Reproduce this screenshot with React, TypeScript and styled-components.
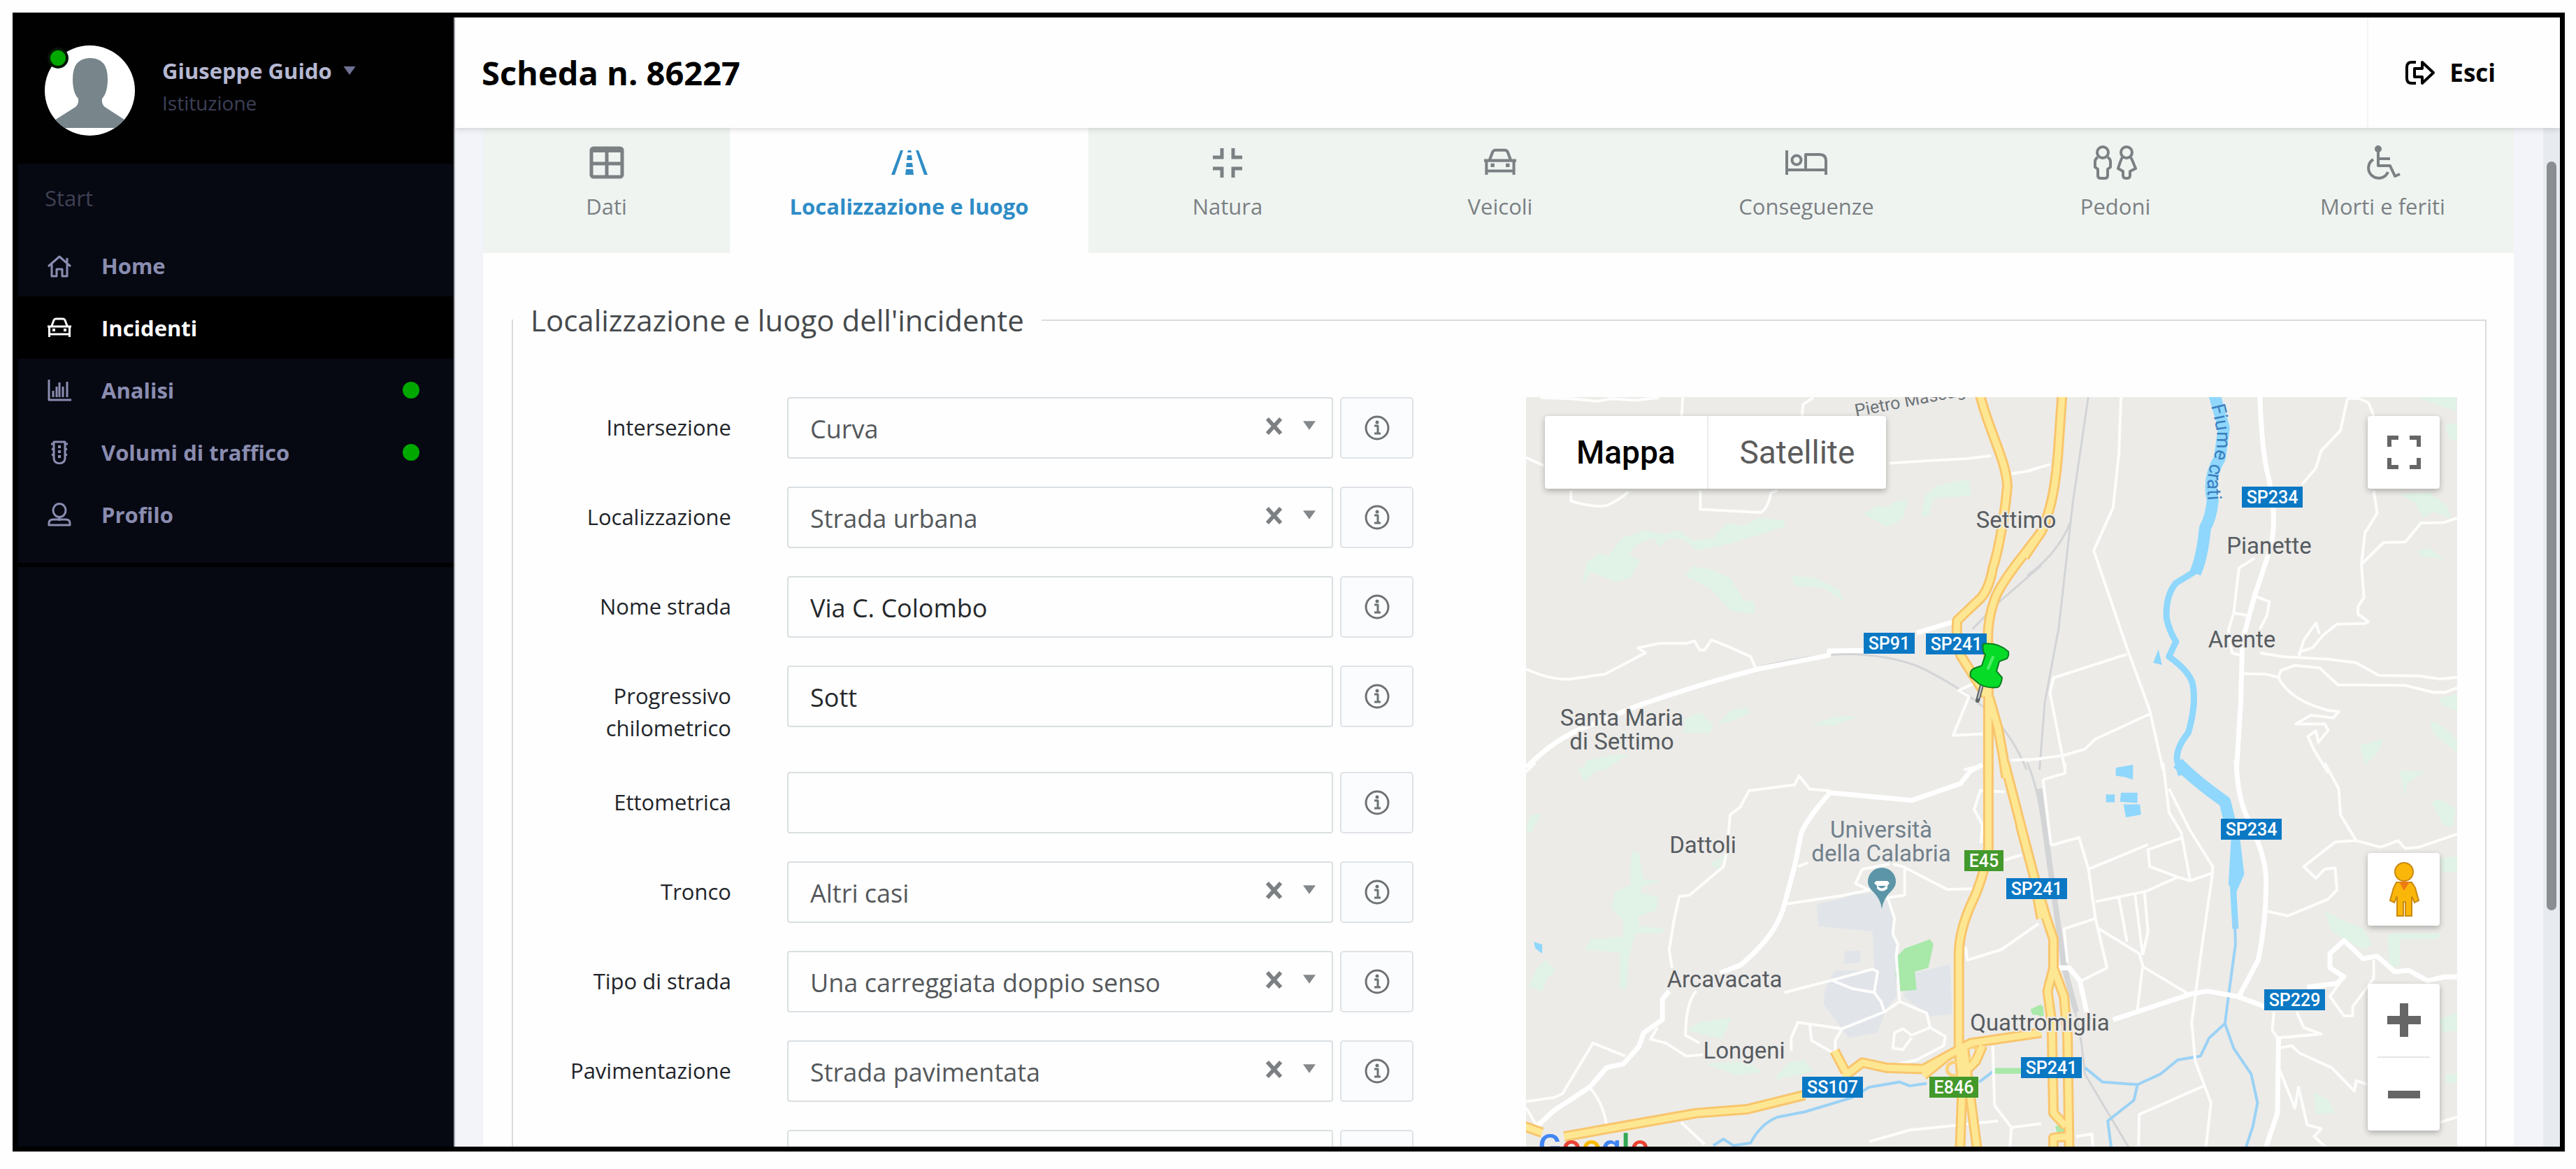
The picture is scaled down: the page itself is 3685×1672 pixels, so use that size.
import React from 'react';
import styled, { createGlobalStyle, css } from 'styled-components';

const GlobalStyle = createGlobalStyle`
  *, *::before, *::after { box-sizing: border-box; }
  html, body { margin: 0; background: #fefefe; }
  body { font-family: 'Open Sans', 'Noto Sans', sans-serif; font-size: 31px; line-height: 46px; color: #212429; }
  button, input, select { font: inherit; color: inherit; margin: 0; }
  a { color: inherit; text-decoration: none; }
`;

/* ---------- shell ---------- */

const Frame = styled.div`
  display: flex;
  height: calc(100vh - 43px);
  margin: 18px 16px 25px 18px;
  border: 7px solid #000;
  overflow: hidden;
`;

const Sidebar = styled.aside`
  flex: 0 0 626px;
  background: #060812;
  border-right: 2px solid #a3a4ab;
  color: #8a8db0;
`;

const Main = styled.main`
  flex: 1;
  min-width: 0;
  display: flex;
  flex-direction: column;
  background: #f2f4f9;
`;

/* ---------- sidebar ---------- */

const Profile = styled.div`
  display: flex;
  align-items: flex-start;
  gap: 39px;
  padding: 40px 39px;
  background: #010102;
`;

const Avatar = styled.div`
  position: relative;
  width: 129px;
  height: 129px;
  flex: none;
  svg { display: block; width: 100%; height: 100%; }
`;

const Online = styled.span`
  position: absolute;
  left: 4px;
  top: 3px;
  width: 30px;
  height: 30px;
  border-radius: 50%;
  background: #00a800;
  border: 4px solid #031703;
`;

const Person = styled.div`
  padding-top: 13px;
`;

const NameButton = styled.button`
  display: flex;
  align-items: center;
  gap: 16px;
  padding: 0;
  border: 0;
  background: none;
  font-size: 31px;
  font-weight: 700;
  line-height: 46px;
  color: #b6b8d2;
  svg { width: 18px; height: 12px; color: #6f7194; }
`;

const Role = styled.div`
  font-size: 28px;
  color: #3d4056;
`;

const NavTitle = styled.h2`
  margin: 0;
  padding: 26px 39px 29px;
  font-size: 31px;
  font-weight: 400;
  line-height: 46px;
  color: #3f4153;
`;

const Nav = styled.nav`
  padding-bottom: 25px;
  border-bottom: 6px solid #010103;
`;

const NavLink = styled.a<{ $active?: boolean }>`
  display: flex;
  align-items: center;
  gap: 43px;
  height: 89px;
  padding: 0 49px 0 43px;
  font-weight: 700;
  color: ${p => (p.$active ? '#fff' : '#8a8db0')};
  background: ${p => (p.$active ? '#000' : 'transparent')};
  svg { width: 34px; height: 34px; flex: none; }
`;

const Dot = styled.span`
  width: 24px;
  height: 24px;
  margin-left: auto;
  border-radius: 50%;
  background: #00a800;
`;

/* ---------- header ---------- */

const Header = styled.header`
  position: relative;
  z-index: 1;
  flex: 0 0 158px;
  display: flex;
  align-items: center;
  justify-content: space-between;
  padding-left: 38px;
  background: #fefefe;
  box-shadow: 0 2px 8px rgba(30, 34, 40, 0.16);
`;

const Title = styled.h1`
  margin: 0;
  font-size: 47px;
  line-height: 64px;
  font-weight: 700;
  color: #000;
`;

const Exit = styled.a`
  display: flex;
  align-items: center;
  align-self: stretch;
  gap: 20px;
  padding: 0 92px 0 52px;
  border-left: 2px solid #f3f4f6;
  font-size: 35px;
  font-weight: 700;
  color: #000;
  svg { width: 44px; height: 36px; }
`;

/* ---------- scroll area ---------- */

const Viewport = styled.div`
  flex: 1;
  min-height: 0;
  display: flex;
`;

const Content = styled.div`
  flex: 1;
  min-width: 0;
  overflow: hidden;
  padding: 0 42px 0 40px;
`;

const Track = styled.div`
  flex: 0 0 24px;
  padding: 48px 5px 0;
  background: #e7ebef;
`;

const Thumb = styled.div`
  height: 76%;
  border-radius: 7px;
  background: #8a8e91;
`;

const Tabs = styled.div`
  display: grid;
  grid-template-columns: 353fr 513fr 398fr 382fr 494fr 390fr 375fr;
  background: #eff4f1;
`;

const Tab = styled.button<{ $active?: boolean }>`
  display: flex;
  flex-direction: column;
  align-items: center;
  gap: 14px;
  height: 179px;
  padding: 25px 0 0;
  border: 0;
  background: ${p => (p.$active ? '#fefefe' : 'transparent')};
  color: ${p => (p.$active ? '#2f8cc6' : '#7b8083')};
  font-weight: ${p => (p.$active ? 700 : 400)};
  svg { height: 50px; }
`;

const Card = styled.section`
  padding: 66px 39px 40px 41px;
  background: #fefefe;
`;

const Fieldset = styled.fieldset`
  min-width: 0;
  margin: 0;
  padding: 80px 40px 40px 0;
  border: 2px solid #d9dbdd;
`;

const Legend = styled.legend`
  padding: 0 25px;
  font-size: 42px;
  line-height: 60px;
  color: #45494c;
`;

const Columns = styled.div`
  display: grid;
  grid-template-columns: 1288fr 1332fr;
  gap: 161px;
`;

/* ---------- form ---------- */

const Form = styled.form`
  display: flex;
  flex-direction: column;
  gap: 40px;
`;

const Row = styled.div`
  display: grid;
  grid-template-columns: 312px 1fr 105px;
  align-items: start;
`;

const Label = styled.label`
  padding: 20px 0 0;
  text-align: right;
`;

const control = css`
  height: 88px;
  margin: 0 10px 0 80px;
  border: 2px solid #dadfe2;
  border-radius: 4px;
  background: #fefefe;
  font-size: 36px;
`;

const TextInput = styled.input`
  ${control}
  min-width: 0;
  padding: 2px 31px 0;
  color: #25282b;
  outline: none;
`;

const SelectBox = styled.div`
  ${control}
  display: flex;
  align-items: center;
  padding-right: 23px;
  color: #54585b;
  > svg { width: 18px; height: 13px; margin-bottom: 8px; color: #85888b; }
`;

const Select = styled.select`
  flex: 1;
  min-width: 0;
  height: 100%;
  padding: 4px 31px 0;
  border: 0;
  background: none;
  appearance: none;
  outline: none;
`;

const Clear = styled.button`
  display: flex;
  padding: 0 29px 0 0;
  margin-bottom: 6px;
  border: 0;
  background: none;
  color: #7d8083;
  svg { width: 25px; height: 25px; }
`;

const InfoButton = styled.button`
  display: grid;
  place-items: center;
  height: 88px;
  padding: 0;
  border: 2px solid #dfe3e7;
  border-radius: 5px;
  background: #fbfcfe;
  color: #6d7275;
  svg { width: 36px; height: 36px; }
`;

/* ---------- map ---------- */

const MapBox = styled.div`
  position: relative;
  height: 1140px;
  overflow: hidden;
  background: #ecebe8;
  font-family: Roboto, sans-serif;
  > svg { display: block; width: 100%; height: 100%; }
`;

const MapType = styled.div`
  position: absolute;
  left: 27px;
  top: 27px;
  display: flex;
  height: 104px;
  background: #fff;
  border-radius: 4px;
  box-shadow: 0 3px 8px rgba(0, 0, 0, 0.28);
`;

const MapTypeButton = styled.button<{ $active?: boolean }>`
  padding: 0 45px;
  border: 0;
  background: none;
  font-size: 46px;
  font-weight: ${p => (p.$active ? 500 : 400)};
  color: ${p => (p.$active ? '#000' : '#5c5c5c')};
  & + & { border-left: 2px solid #ececec; }
`;

const MapTools = styled.div<{ $top: number }>`
  position: absolute;
  right: 25px;
  top: ${p => p.$top}px;
  width: 103px;
  background: #fff;
  border-radius: 4px;
  box-shadow: 0 3px 8px rgba(0, 0, 0, 0.28);
`;

const MapTool = styled.button`
  display: grid;
  place-items: center;
  width: 100%;
  height: 104px;
  padding: 0;
  border: 0;
  background: none;
  color: #666;
  svg { display: block; }
`;

const ToolRule = styled.div`
  height: 2px;
  margin: 0 14px;
  background: #e6e6e6;
`;

/* ---------- icons ---------- */

const Line: React.FC<{ box: string; sw?: number; children: React.ReactNode }> = ({ box, sw = 3, children }) => (
  <svg viewBox={box} fill="none" stroke="currentColor" strokeWidth={sw} strokeLinejoin="round" aria-hidden="true">
    {children}
  </svg>
);

const Caret = () => (
  <svg viewBox="0 0 20 14" aria-hidden="true"><path d="M0 0H20L10 14Z" fill="currentColor" /></svg>
);

const HomeIcon = () => (
  <Line box="0 0 34 34"><path d="M1 18L17 4L33 18M6 15V32H13V22H21V32H28V15M28 12V6" /></Line>
);

const CarShape = () => (
  <>
    <path d="M6 14L9 6Q10 4 12 4H22Q24 4 25 6L28 14M0 15H34M2.500 15V30M31.500 15V30M2.500 26H31.500" />
    <path d="M7 18h4v4h-4zM23 18h4v4h-4z" fill="currentColor" stroke="none" />
  </>
);

const CarIcon = () => <Line box="0 0 34 34"><CarShape /></Line>;

const ChartIcon = () => (
  <Line box="0 0 34 34"><path d="M2 2V31H34" /><path d="M8 27V18M13 27V12M17 27V6M22 27V12M28 27V5" /></Line>
);

const TrafficIcon = () => (
  <Line box="0 0 34 34">
    <path d="M9 2H25V25Q25 32 17 33Q9 32 9 25ZM5 5H9M25 5H29M6 12L9 13M28 12L25 13M6 20L9 21M28 20L25 21" />
    <path d="M15 7h4v4h-4zM15 14h4v4h-4zM15 21h4v4h-4z" fill="currentColor" stroke="none" />
  </Line>
);

const UserIcon = () => (
  <Line box="0 0 34 34"><ellipse cx="17" cy="11" rx="9" ry="9.500" /><path d="M17 20V26M2 32V29Q2 24 8 24H26Q32 24 32 29V32Z" /></Line>
);

const ExitIcon = () => (
  <Line box="0 0 44 36" sw={4}>
    <path d="M16 3H10Q3 3 3 10V26Q3 33 10 33H16M14 12H25V3L41 18L25 33V24H14Z" />
  </Line>
);

const TableIcon = () => (
  <Line box="0 0 50 50" sw={5}><rect x="3" y="4" width="44" height="41" rx="3" /><path d="M3 7H47" strokeWidth="6" /><path d="M25 6V45M3 26H47" /></Line>
);

const RoadIcon = () => (
  <svg viewBox="0 0 54 50" fill="currentColor" aria-hidden="true">
    <path d="M14 7h4L6 42H1ZM36 7h4L53 42H48ZM25 7h4l1 3h-6ZM24 14h6l1 7h-8ZM23 25h8l1 6h-10ZM22 34h10l1 8H21Z" />
  </svg>
);

const CompressIcon = () => (
  <Line box="0 0 42 50" sw={5}><path d="M13 4V17H0M29 4V17H42M13 46V33H0M29 46V33H42" strokeLinejoin="miter" /></Line>
);

const CarTabIcon = () => <Line box="0 -1 34 37" sw={3}><CarShape /></Line>;

const BedIcon = () => (
  <Line box="0 0 62 50" sw={4}>
    <path d="M3 7V42M3 35H59M59 42V22Q59 13 50 13H30V35" /><circle cx="17" cy="21" r="6.500" />
  </Line>
);

const PeopleIcon = () => (
  <Line box="0 0 64 50" sw={4}>
    <circle cx="14" cy="10" r="8" />
    <path d="M7 17Q3 19 3 23V31L7 34V43Q7 47 11 47H17Q21 47 21 43V34L25 31V23Q25 19 21 17" />
    <circle cx="48" cy="10" r="8" />
    <path d="M42 17Q40 20 36 33L43 37V43Q43 47 48 47Q53 47 53 43V37L61 33Q56 20 54 17" />
  </Line>
);

const WheelchairIcon = () => (
  <Line box="0 0 50 50" sw={4}>
    <circle cx="18" cy="5" r="5" fill="currentColor" stroke="none" />
    <path d="M18 7V29H35L42 44L49 41M18 19H35M11 20A14.500 14.500 0 1 0 32 38" />
  </Line>
);

const InfoIcon = () => (
  <Line box="0 0 36 36" sw={3}>
    <circle cx="18" cy="18" r="16" /><path d="M14 15H19V26M14 26H23" /><circle cx="18" cy="10" r="2.500" fill="currentColor" stroke="none" />
  </Line>
);

const CrossIcon = () => (
  <Line box="0 0 26 26" sw={6}><path d="M3 2L23 24M23 2L3 24" /></Line>
);

const Silhouette = () => (
  <svg viewBox="0 0 129 129" role="img" aria-label="Foto profilo">
    <clipPath id="face"><circle cx="64.500" cy="64.500" r="64.500" /></clipPath>
    <g clipPath="url(#face)">
      <rect width="129" height="129" fill="#fff" />
      <path d="M6 112L44 88Q49 84 48 76Q40 68 40 48Q40 18 65 18Q90 18 90 48Q90 68 82 76Q81 84 86 88L123 112V118H6Z" fill="#78858a" />
    </g>
  </svg>
);

/* ---------- map drawing ---------- */

// The map is drawn on four sheets, each with its own grid.
type Sheet = 'nw' | 'ne' | 'sw' | 'se';
const sheets: Record<Sheet, string> = {
  nw: 'translate(-23 -27) scale(.4847 .3571)',
  ne: 'translate(717 -27) scale(.5006 .3571)',
  sw: 'translate(-23 523) scale(.4847 .3712)',
  se: 'translate(717 523) scale(.5006 .3712)',
};

type Layer = { stroke?: string; width?: number; fill?: string; paths: Partial<Record<Sheet, string>> };

const woods: Layer = {
  fill: '#e0f3e6',
  paths: {
    nw: 'M215 830L225 740L262 700L290 712L330 640L400 610L450 625L500 610L540 650L600 640L640 580L690 590L735 560L812 570L808 595L740 625L640 665L550 690L510 645L470 640L440 675L425 640L380 660L350 700L385 735L355 800L310 815L240 775ZM515 790L540 755L590 765L650 800L690 890L722 895L722 945L650 930L590 840ZM828 790L900 800L970 845L985 895L925 840L840 830ZM1045 545L1080 510L1120 520L1130 495L1175 485L1160 560L1115 595ZM1215 555L1225 470L1260 430L1355 405L1362 470L1250 480L1235 550ZM510 1420L520 1360L565 1340L600 1390L590 1420ZM615 1385L650 1330L700 1320L710 1340L660 1370ZM890 1390L960 1355L1025 1355L960 1390ZM220 1568L225 1530L300 1510L350 1505L280 1568Z',
    ne: 'M1115 76L1228 76L1225 130L1160 100ZM1195 185L1228 180L1228 255L1205 240ZM1065 465L1150 460L1200 510L1210 560L1160 535L1130 560L1110 500ZM1115 690L1150 680L1190 725L1125 712ZM1175 1285L1228 1265L1228 1330L1195 1315ZM1150 1370L1190 1395L1228 1450L1228 1500L1160 1420ZM950 1470L1018 1445L1000 1500L965 1550Z',
    sw: 'M355 430L360 340L380 345L395 450L450 455L390 475L385 500L440 520L430 570L380 590L380 630L455 640L450 655L370 655L350 760L345 870L325 870L325 730L220 720L240 680L335 670L335 610L300 560L310 500L355 470ZM48 260L60 205L95 195L60 270ZM55 860L80 790L105 760L135 800L110 830L95 880ZM520 1030L560 1000L655 980L625 1065ZM580 1160L700 1150L745 1190L670 1205ZM780 1220L820 1155L870 1145L895 1190ZM200 20L300 0L240 45L220 75ZM590 390L635 355L615 410Z',
    se: 'M1065 30L1135 35L1085 80L1080 135ZM1155 150L1180 140L1225 180L1215 250L1190 240ZM850 570L890 600L960 640L985 700L960 720L870 650ZM1030 660L1180 655L1175 680L1065 680L1065 780L1035 790ZM1180 990L1228 960L1228 1030L1185 1040ZM820 1270L860 1300L880 1350L825 1355ZM1180 370L1228 360V420H1185ZM1195 1200H1228V1235H1195Z',
  },
};

const campus: Layer = {
  fill: '#e1e5e9',
  paths: {
    sw: 'M905 545L960 530L1010 510L1090 500L1130 560L1135 660L1145 700L1140 900L1110 950L1085 1040L1000 1060L925 930L930 870L960 800L1075 800L1070 650L910 630ZM1195 810L1300 775L1305 970L1240 975L1160 900ZM990 725L1035 725L1035 770L985 775Z',
  },
};

const parks: Layer = {
  fill: '#a8e8a9',
  paths: {
    sw: 'M1140 750L1165 715L1240 680L1250 700L1235 790L1195 805L1200 875L1150 880L1138 820ZM1430 1176L1510 1176V1198H1430ZM1535 950L1568 930V980Z',
    se: 'M10 955L45 935L48 975L15 970ZM80 1400L100 1395L108 1420L85 1425Z',
  },
};

const ponds: Layer = {
  fill: '#8fd7fc',
  paths: {
    ne: 'M360 1140L375 1085L385 1148ZM255 1590V1560L302 1548V1590Z',
    sw: 'M70 690L95 700L95 735L75 715Z',
    se: 'M253 20L302 10L302 65L280 55L253 50ZM225 122H250V152H225ZM268 115H315V155L265 150ZM275 160H322L325 200L282 210ZM583 280H607L620 430L597 500L575 470Z',
  },
};

const river: Layer = {
  stroke: '#8fd7fc',
  width: 17,
  paths: {
    ne: 'M535 66L562 200L550 320Q515 400 530 490Q525 560 508 600Q500 720 480 780',
    se: 'M430 0Q480 70 565 150L590 290',
  },
};

const riverBend: Layer = {
  stroke: '#8fd7fc',
  width: 9,
  paths: {
    ne: 'M484 770L425 820Q395 870 398 960Q405 1010 425 1055L405 1115Q460 1170 472 1220Q485 1300 460 1420Q425 1480 428 1530L440 1590',
    se: 'M588 470L595 640',
  },
};

const streams: Layer = {
  stroke: '#9bd2f5',
  width: 4,
  paths: {
    sw: 'M600 1475L630 1450L660 1475L710 1465Q740 1390 790 1365L870 1345L1010 1290L1060 1250L1150 1230L1180 1245L1230 1235M1385 1230L1430 1185',
    se: 'M593 600L595 700L575 900L565 1005L520 1060L495 1130L430 1145L380 1200L315 1240L215 1230L165 1175M565 1005L590 1100L640 1200L658 1310L645 1400L625 1482M315 1240L305 1300L230 1380L240 1482',
  },
};

const rails: Layer = {
  stroke: '#d3d4d6',
  width: 3,
  paths: {
    nw: 'M1568 750L1440 900L1365 1005M740 1155Q900 1105 1000 1105Q1140 1110 1230 1170Q1330 1240 1400 1320Q1480 1420 1525 1568',
    ne: 'M175 70L130 500L90 1000L50 1300L35 1568M125 570Q90 700 0 790',
    se: 'M0 0Q30 90 45 250Q75 500 100 790L125 870L155 1080L165 1200L290 1482',
  },
};

const railYard: Layer = {
  stroke: '#d3d4d6',
  width: 8,
  paths: { se: 'M35 100Q55 300 65 400L90 640L108 800L140 960' },
};

const lanes: Layer = {
  stroke: '#fdfdfc',
  width: 4,
  paths: {
    nw: 'M48 318L100 350M180 450V492Q250 520 285 510Q320 490 350 455M562 450V525L740 538Q762 520 770 460L790 448M510 70L507 150M862 150L865 105L895 78M90 78L180 82L255 92L300 82L370 88L440 78M1120 340L1240 330L1350 322L1420 310M1480 382L1530 372L1568 355M48 1165Q120 1210 180 1205L280 1185L400 1100L378 1080L440 1062L520 1062L545 1052L560 1088H575L595 1048L640 1072L710 1115L725 1160M1390 1210L1325 1250L1355 1275L1308 1430L1395 1425M1480 1530L1568 1525M1340 1568L1395 1550',
    ne: 'M268 70L262 300L245 520L190 690L280 1060L350 1330L388 1568M285 1105L75 1200L65 1260L108 1568M350 1345L195 1445L165 1485L105 1510L0 1530M0 372L65 345M650 720L605 760L590 940L575 1010L585 1100L610 1110M590 940L630 950M655 875L692 895L685 950L665 1005M915 80L895 210L840 290L825 360L785 425M915 80L950 82L975 98L990 150M990 450L1000 540L965 620L955 745L962 880L945 915V945L975 975L965 982L885 985L845 1030L815 1080L780 1095L790 1050L825 980L835 1025M955 745L1018 658L1080 656L1125 580L1190 578L1228 560M665 1100L730 1115L860 1125L940 1140L1005 1190L1120 1192L1180 1205L1228 1198M610 1183L680 1185L718 1198L725 1170L765 1150L835 1160L888 1228L1080 1230L1160 1258H1195L1228 1240M718 1198Q750 1290 860 1330L890 1335L875 1360L810 1350L768 1385L850 1385L860 1410L832 1458L825 1412L802 1435L820 1490L860 1580M778 1120V1095',
    sw: 'M945 108L885 102L853 50L840 85L705 108L680 170L650 200L640 340L630 400L530 510L500 515L485 600L470 720L478 790M48 35L75 0M850 400L880 385M810 545L980 512L1060 490L1020 465L1040 410L1120 390M1130 390L1160 400L1290 488L1370 485M1165 400V510L1115 520L1135 600L1130 660L1145 700L1140 740L1150 920M810 885L950 838L1070 795L1085 805L1075 885L1095 920L1105 960L980 1025L960 1070V1110M950 838L1010 870L1075 885M1150 920L1105 960M1150 920L1230 965L1240 1020L1285 1055L1280 1090L1200 1145L1130 1165M1240 1020L1185 1050L1160 1025L1135 1040L1130 1100L1160 1105L1185 1060M980 1025L930 1015L850 1000L830 1060V1110M885 1010L890 1070L950 1115M550 880Q520 920 518 1050L560 1080M435 1020L415 1065L460 1080L520 1130L570 1125M48 1305L130 1290L155 1275L245 1080L340 1130M48 1330L80 1400M235 1250Q275 1310 285 1395M505 1385L575 1470M1345 710L1350 760L1450 720L1560 620M1390 100L1370 180L1395 240L1390 310M1390 108L1460 112M1425 1090L1430 1320L1480 1405L1475 1490M1060 1460L1180 1415L1440 1380M1480 1405L1568 1390M1460 375L1510 355',
    se: 'M388 0L405 190L440 270L465 450M405 100L465 260L530 400L528 440L500 700L470 1000L480 1150L525 1310L510 1490M440 290L345 335L350 400L430 440L465 455L528 425M430 440L340 495L195 535M345 315L175 410M68 318L148 288L175 410L195 600L228 790L155 840M45 65L68 318M45 65L108 40V0M195 600L105 640L115 770M205 640L320 735L330 780L315 950M330 785L460 890M262 520L285 690M308 505L330 740M335 500L345 650L330 740M850 0L890 100L895 200L940 300L1010 325L1060 300L1080 330L1120 325L1228 275M940 300L880 305L790 400L825 445L850 410L880 405L885 490L860 525L745 590L685 572M990 760V830L930 940V975H905L865 900L905 825M705 960L700 1030L715 1060L840 1045L790 1020L770 960M720 1100L755 1090L780 1120L870 1175L935 1265L940 1225L970 1238M720 1180L765 1330L775 1250L800 1395L840 1410L820 1440L860 1490M505 1245L320 1355L318 1490M1180 1385L1228 1365M140 1440L185 1430L188 1490',
  },
};

const roads: Layer = {
  stroke: '#fff',
  width: 7,
  paths: {
    nw: 'M48 1560Q120 1460 200 1410L380 1310Q560 1225 730 1165L940 1110L942 1092L1045 1090M1200 1020L1310 975',
    ne: 'M665 70Q670 300 690 400Q715 560 695 680L650 870L615 1050L610 1300L598 1568',
    sw: 'M945 115L1185 145L1330 80L1360 30L1395 8M945 115Q880 210 860 270L840 400L810 545Q790 660 680 780L620 810M470 880L450 910V990L395 1040L380 1095L335 1160L285 1175L235 1250L130 1340L80 1400',
    se: 'M597 -10Q600 120 625 200Q680 350 682 440Q685 600 660 760L605 900M245 990L470 890L515 880L600 900L680 940M718 1060L715 1350L680 1490M90 790H120L150 840L170 960M1228 825H1190L1145 840L1090 800L1050 805L1000 745L960 755L905 685L865 735V790L905 825L885 850L800 865',
  },
};

const motorwayPaths: Partial<Record<Sheet, string>> = {
  nw: 'M1386 60C1410 200 1465 330 1468 430C1460 560 1440 700 1425 760Q1415 840 1390 880L1320 970Q1315 1060 1330 1110L1405 1270M1568 615L1520 700Q1450 820 1432 880Q1405 980 1412 1080V1600M1415 1280L1440 1400Q1455 1500 1465 1600',
  ne: 'M100 60L88 300Q80 450 60 540Q50 590 40 615L-8 715',
  sw: 'M1412 0V330Q1400 430 1370 520Q1325 640 1325 740V1100L1335 1250L1328 1500M1460 0Q1500 200 1545 430L1568 600M1340 1100L1360 1300L1380 1500M30 1395L95 1425M160 1440L550 1350L700 1335L870 1280M985 1210L1040 1155L1110 1175L1220 1180L1360 1080L1568 1040M958 1110L990 1190M1220 1205L1290 1130M1395 1090L1375 1150L1340 1195',
  se: 'M-20 240L18 430L55 600L75 680V790L58 880L70 1000L75 1350L110 1400M75 790L105 900L115 1050L120 1500M75 1500V1445L110 1440',
};

const motorwayEdge: Layer = { stroke: '#f9c56c', width: 15, paths: motorwayPaths };
const motorway: Layer = { stroke: '#fee793', width: 9, paths: motorwayPaths };
const junctions: Layer = {
  stroke: '#fbd27a',
  width: 5,
  paths: { sw: 'M1290 1180A22 26 0 1 1 1334 1180A22 26 0 1 1 1290 1180M1342 1118A20 24 0 1 1 1382 1118A20 24 0 1 1 1342 1118' },
};

const layers = [woods, campus, parks, rails, railYard, river, riverBend, ponds, streams, lanes, roads, motorwayEdge, junctions, motorway];

const places: [string, number, number][] = [
  ['Settimo', 701, 187],
  ['Pianette', 1063, 224],
  ['Arente', 1024, 358],
  ['Santa Maria', 137, 470],
  ['di Settimo', 137, 504],
  ['Dattoli', 253, 652],
  ['Arcavacata', 284, 844],
  ['Longeni', 312, 946],
  ['Quattromiglia', 735, 906],
];

const shields: [string, number, number, number, string][] = [
  ['SP91', 483, 337, 73, '#0b78c4'],
  ['SP241', 572, 338, 87, '#0b78c4'],
  ['E45', 627, 648, 56, '#43992b'],
  ['SP241', 687, 688, 87, '#0b78c4'],
  ['SS107', 395, 972, 87, '#0b78c4'],
  ['E846', 577, 972, 70, '#43992b'],
  ['SP241', 708, 944, 87, '#0b78c4'],
  ['SP234', 1024, 128, 87, '#0b78c4'],
  ['SP234', 994, 603, 87, '#0b78c4'],
  ['SP229', 1056, 847, 87, '#0b78c4'],
];

const google: [string, string][] = [
  ['G', '#4285f4'], ['o', '#ea4335'], ['o', '#fbbc05'], ['g', '#4285f4'], ['l', '#34a853'], ['e', '#ea4335'],
];

const MapDrawing = () => (
  <svg viewBox="0 0 1332 1140" preserveAspectRatio="xMinYMin slice" role="img" aria-label="Mappa del luogo dell'incidente">
    <rect width="1332" height="1140" fill="#ecebe8" />
    {layers.map((layer, i) => (
      <g key={i} fill={layer.fill ?? 'none'} stroke={layer.stroke} strokeWidth={layer.width} strokeLinejoin="round">
        {(Object.keys(layer.paths) as Sheet[]).map(sheet => (
          <path key={sheet} d={layer.paths[sheet]} transform={sheets[sheet]} vectorEffect="non-scaling-stroke" />
        ))}
      </g>
    ))}

    <path id="crati" d="M980 12C990 50 992 70 980 95C972 115 974 140 980 190" fill="none" />
    <text fontSize="28" fill="#3c7fbf"><textPath href="#crati">Fiume crati</textPath></text>
    <text fontSize="25" fill="#6c7378" transform="translate(472 28) rotate(-11)">Pietro Mascagni</text>

    {shields.map(([name, x, y, w, color], i) => (
      <g key={i}>
        <rect x={x} y={y} width={w} height="30" fill={color} />
        <text x={x + w / 2} y={y + 24} fontSize="25" fontWeight="500" fill="#fff" textAnchor="middle">{name}</text>
      </g>
    ))}

    <g fontSize="33" fill="#575c61" stroke="#ecebe8" strokeWidth="4" paintOrder="stroke" textAnchor="middle">
      {places.map(([name, x, y]) => <text key={name} x={x} y={y}>{name}</text>)}
      <g fill="#71808b">
        <text x="508" y="630">Università</text>
        <text x="508" y="664">della Calabria</text>
      </g>
    </g>

    <path d="M509 732Q507 717 496 707Q489 700 489 693A20 20 0 0 1 529 693Q529 700 522 707Q511 717 509 732Z" fill="#5b95a7" />
    <path d="M498 695L501 692H517L520 695L517 699V703Q509 710 502 703V699Z" fill="#fff" />
    <path d="M503 699H515Q509 706 503 699Z" fill="#5b95a7" />

    <path d="M652 412L646 434" stroke="#5f6466" strokeWidth="6" strokeLinecap="round" />
    <path d="M652 412L647 431" stroke="#c9cccd" strokeWidth="2" />
    <path d="M654 353Q675 350 690 364Q691 370 688 374L677 378L673 392L681 401Q680 412 675 415Q660 417 648 410L636 400Q634 391 641 388L652 384L657 369Q652 362 654 353Z" fill="#06dc28" stroke="#0b7d1e" strokeWidth="2" />
    <path d="M661 388L668 372" stroke="#4fee66" strokeWidth="4" strokeLinecap="round" />

    <text x="17" y="1090" fontSize="50" fontWeight="500">
      {google.map(([letter, color], i) => <tspan key={i} fill={color}>{letter}</tspan>)}
    </text>
  </svg>
);

const Pegman = () => (
  <svg width="46" height="80" viewBox="0 0 46 80" aria-hidden="true">
    <g fill="#fbb60a" stroke="#c98a12" strokeWidth="2">
      <path d="M12 30H34L39 38L44 56L38 59L34 50V78H25V58H22V78H13V50L9 59L3 56L8 38Z" />
      <circle cx="23" cy="15" r="13" />
    </g>
    <path d="M16 29H31L23 42Z" fill="#ef7a14" />
  </svg>
);

/* ---------- page ---------- */

const navItems = [
  { name: 'Home', icon: <HomeIcon /> },
  { name: 'Incidenti', icon: <CarIcon />, active: true },
  { name: 'Analisi', icon: <ChartIcon />, dot: true },
  { name: 'Volumi di traffico', icon: <TrafficIcon />, dot: true },
  { name: 'Profilo', icon: <UserIcon /> },
];

const tabItems = [
  { name: 'Dati', icon: <TableIcon /> },
  { name: 'Localizzazione e luogo', icon: <RoadIcon />, active: true },
  { name: 'Natura', icon: <CompressIcon /> },
  { name: 'Veicoli', icon: <CarTabIcon /> },
  { name: 'Conseguenze', icon: <BedIcon /> },
  { name: 'Pedoni', icon: <PeopleIcon /> },
  { name: 'Morti e feriti', icon: <WheelchairIcon /> },
];

const fields = [
  { id: 'intersezione', label: 'Intersezione', value: 'Curva', select: true },
  { id: 'localizzazione', label: 'Localizzazione', value: 'Strada urbana', select: true },
  { id: 'nome', label: 'Nome strada', value: 'Via C. Colombo' },
  { id: 'progressivo', label: 'Progressivo chilometrico', value: 'Sott' },
  { id: 'ettometrica', label: 'Ettometrica', value: '' },
  { id: 'tronco', label: 'Tronco', value: 'Altri casi', select: true },
  { id: 'tipo', label: 'Tipo di strada', value: 'Una carreggiata doppio senso', select: true },
  { id: 'pavimentazione', label: 'Pavimentazione', value: 'Strada pavimentata', select: true },
  { id: 'altro', label: '', value: '' },
];

export default function App() {
  return (
    <>
      <GlobalStyle />
      <Frame>
        <Sidebar>
          <Profile>
            <Avatar><Silhouette /><Online /></Avatar>
            <Person>
              <NameButton type="button">Giuseppe Guido<Caret /></NameButton>
              <Role>Istituzione</Role>
            </Person>
          </Profile>
          <NavTitle>Start</NavTitle>
          <Nav>
            {navItems.map(item => (
              <NavLink key={item.name} href="#" $active={item.active}>
                {item.icon}{item.name}{item.dot && <Dot />}
              </NavLink>
            ))}
          </Nav>
        </Sidebar>

        <Main>
          <Header>
            <Title>Scheda n. 86227</Title>
            <Exit href="#"><ExitIcon />Esci</Exit>
          </Header>
          <Viewport>
            <Content>
              <Tabs role="tablist">
                {tabItems.map(tab => (
                  <Tab key={tab.name} type="button" role="tab" aria-selected={!!tab.active} $active={tab.active}>
                    {tab.icon}{tab.name}
                  </Tab>
                ))}
              </Tabs>
              <Card>
                <Fieldset>
                  <Legend>Localizzazione e luogo dell'incidente</Legend>
                  <Columns>
                    <Form>
                      {fields.map(field => (
                        <Row key={field.id}>
                          <Label htmlFor={field.id}>{field.label}</Label>
                          {field.select ? (
                            <SelectBox>
                              <Select id={field.id} defaultValue={field.value}>
                                <option>{field.value}</option>
                              </Select>
                              <Clear type="button" aria-label="Cancella"><CrossIcon /></Clear>
                              <Caret />
                            </SelectBox>
                          ) : (
                            <TextInput id={field.id} type="text" defaultValue={field.value} />
                          )}
                          <InfoButton type="button" aria-label="Informazioni"><InfoIcon /></InfoButton>
                        </Row>
                      ))}
                    </Form>
                    <MapBox>
                      <MapDrawing />
                      <MapType>
                        <MapTypeButton type="button" $active>Mappa</MapTypeButton>
                        <MapTypeButton type="button">Satellite</MapTypeButton>
                      </MapType>
                      <MapTools $top={27}>
                        <MapTool type="button" aria-label="Schermo intero">
                          <svg width="48" height="48" viewBox="0 0 48 48" fill="none" stroke="currentColor" strokeWidth="6">
                            <path d="M3 16V3H16M32 3H45V16M45 32V45H32M16 45H3V32" />
                          </svg>
                        </MapTool>
                      </MapTools>
                      <MapTools $top={652}>
                        <MapTool type="button" aria-label="Street View"><Pegman /></MapTool>
                      </MapTools>
                      <MapTools $top={839}>
                        <MapTool type="button" aria-label="Ingrandisci">
                          <svg width="48" height="48" viewBox="0 0 48 48" fill="currentColor"><path d="M18 0H30V18H48V30H30V48H18V30H0V18H18Z" /></svg>
                        </MapTool>
                        <ToolRule />
                        <MapTool type="button" aria-label="Riduci">
                          <svg width="46" height="11" viewBox="0 0 46 11" fill="currentColor"><path d="M0 0H46V11H0Z" /></svg>
                        </MapTool>
                      </MapTools>
                    </MapBox>
                  </Columns>
                </Fieldset>
              </Card>
            </Content>
            <Track aria-hidden="true"><Thumb /></Track>
          </Viewport>
        </Main>
      </Frame>
    </>
  );
}
